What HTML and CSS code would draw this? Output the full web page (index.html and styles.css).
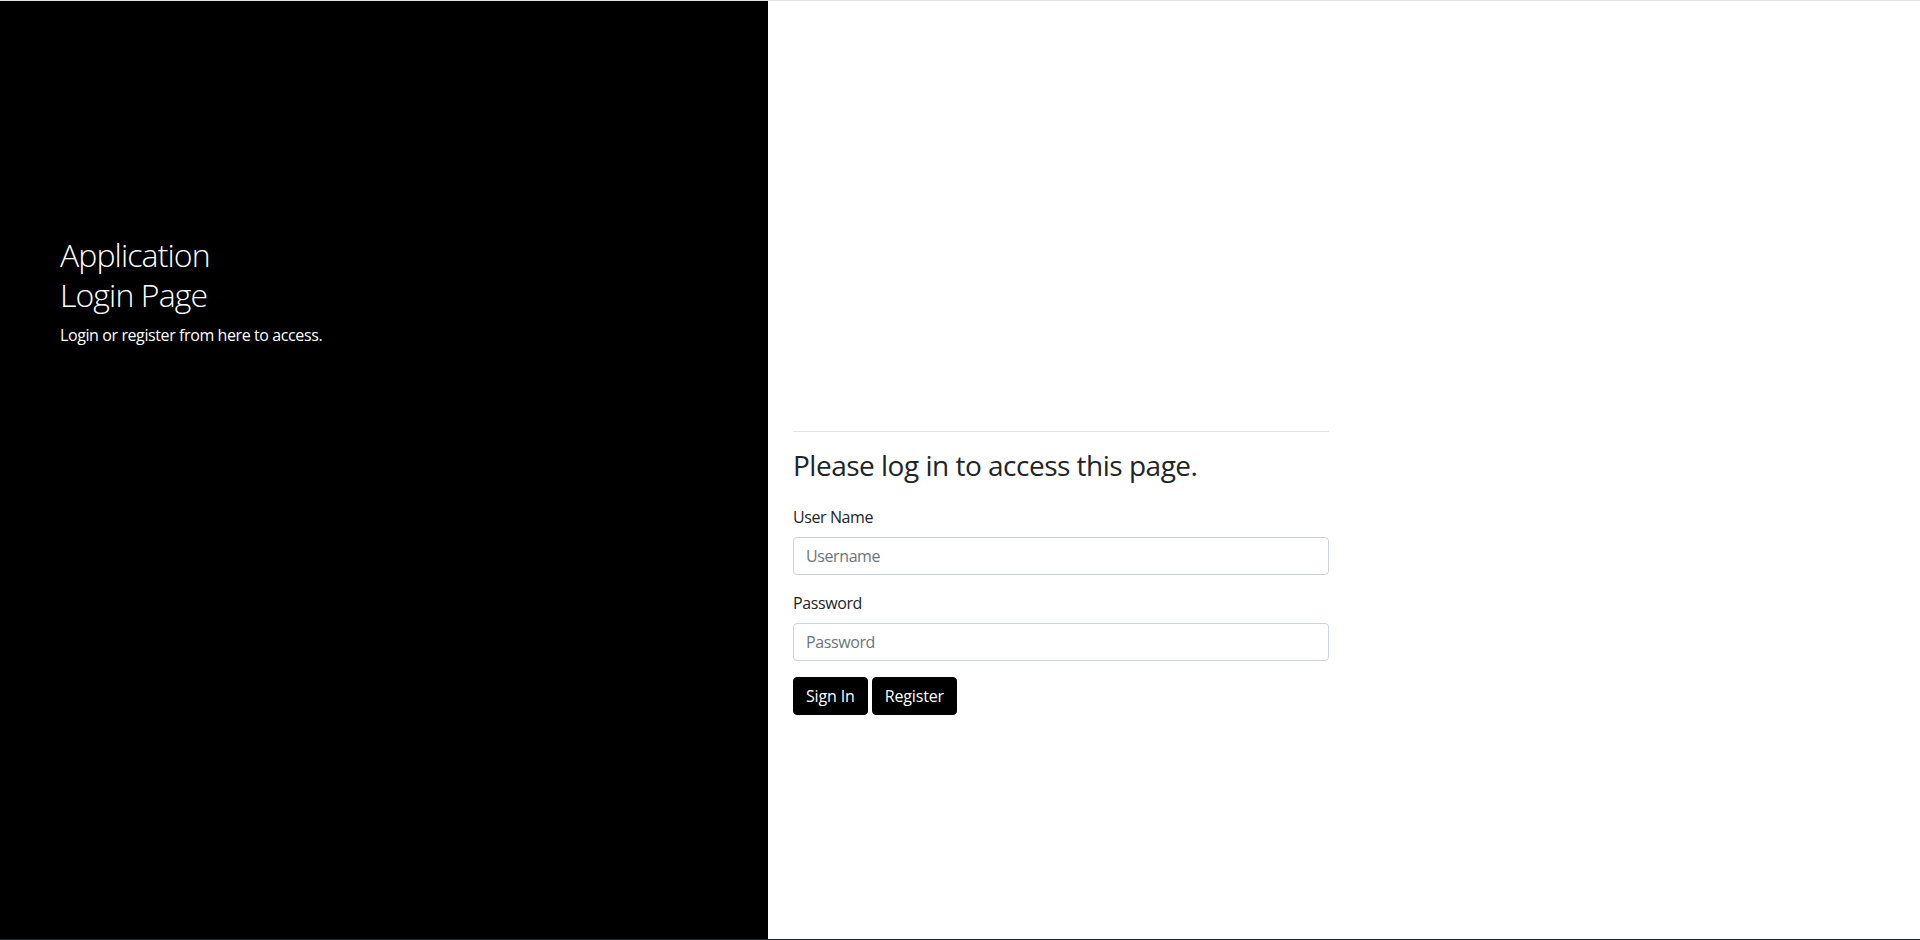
FILE: index.html
```html
<!DOCTYPE html>
<html lang="en">
<head>
<meta charset="utf-8">
<title>Login</title>
<link rel="stylesheet" href="styles.css">
</head>
<body>
<div class="auth">
  <aside class="brand">
    <h2 class="brand-title">Application<br>Login Page</h2>
    <p class="brand-text">Login or register from here to access.</p>
  </aside>
  <main class="main">
    <div class="login">
      <hr class="divider">
      <h3 class="login-title">Please log in to access this page.</h3>
      <form class="login-form">
        <div class="field">
          <label class="field-label" for="user">User Name</label>
          <input class="field-input" id="user" type="text" placeholder="Username">
        </div>
        <div class="field">
          <label class="field-label" for="pass">Password</label>
          <input class="field-input" id="pass" type="password" placeholder="Password">
        </div>
        <div class="actions">
          <button type="button" class="btn">Sign In</button>
          <button type="button" class="btn">Register</button>
        </div>
      </form>
    </div>
  </main>
</div>
</body>
</html>
```
FILE: styles.css
```css
html, body {
  margin: 0;
  padding: 0;
}
body {
  height: 940px;
  box-sizing: border-box;
  border-top: 1px solid #e1e1e1;
  border-bottom: 1px solid #1b2429;
  font-family: "Open Sans", "Noto Sans", sans-serif;
  letter-spacing: -0.4px;
  color: #212529;
  background: #fff;
  overflow: hidden;
}
.auth {
  display: flex;
  height: 938px;
}
.brand {
  flex: 0 0 768px;
  background: #000;
  color: #fff;
  box-sizing: border-box;
  padding: 234px 0 0 60px;
}
.brand-title {
  margin: 0;
  font-size: 32px;
  line-height: 40px;
  font-weight: 300;
  letter-spacing: -0.9px;
}
.brand-text {
  margin: 8px 0 0;
  font-size: 16px;
  line-height: 24px;
}
.main {
  flex: 1;
  padding: 430px 0 0 25px;
}
.login {
  width: 536px;
}
.divider {
  margin: 0 0 16px;
  border: 0;
  border-top: 1px solid rgba(0, 0, 0, 0.1);
}
.login-title {
  margin: 0 0 23px;
  font-size: 28px;
  line-height: 34px;
  font-weight: 400;
  letter-spacing: -0.5px;
}
.field {
  margin-bottom: 16px;
}
.field-label {
  display: block;
  font-size: 16px;
  line-height: 24px;
  margin-bottom: 8px;
}
.field-input {
  display: block;
  width: 100%;
  height: 38px;
  box-sizing: border-box;
  padding: 6px 12px;
  font-family: inherit;
  font-size: 16px;
  letter-spacing: -0.4px;
  color: #495057;
  background: #fff;
  border: 1px solid #ced4da;
  border-radius: 4px;
}
.field-input::placeholder {
  color: #6c757d;
}
.actions {
  display: flex;
  gap: 4px;
}
.btn {
  height: 38px;
  padding: 6px 12px;
  font-family: inherit;
  font-size: 16px;
  line-height: 24px;
  letter-spacing: -0.15px;
  color: #fff;
  background: #000;
  border: 1px solid #000;
  border-radius: 4px;
}
```
